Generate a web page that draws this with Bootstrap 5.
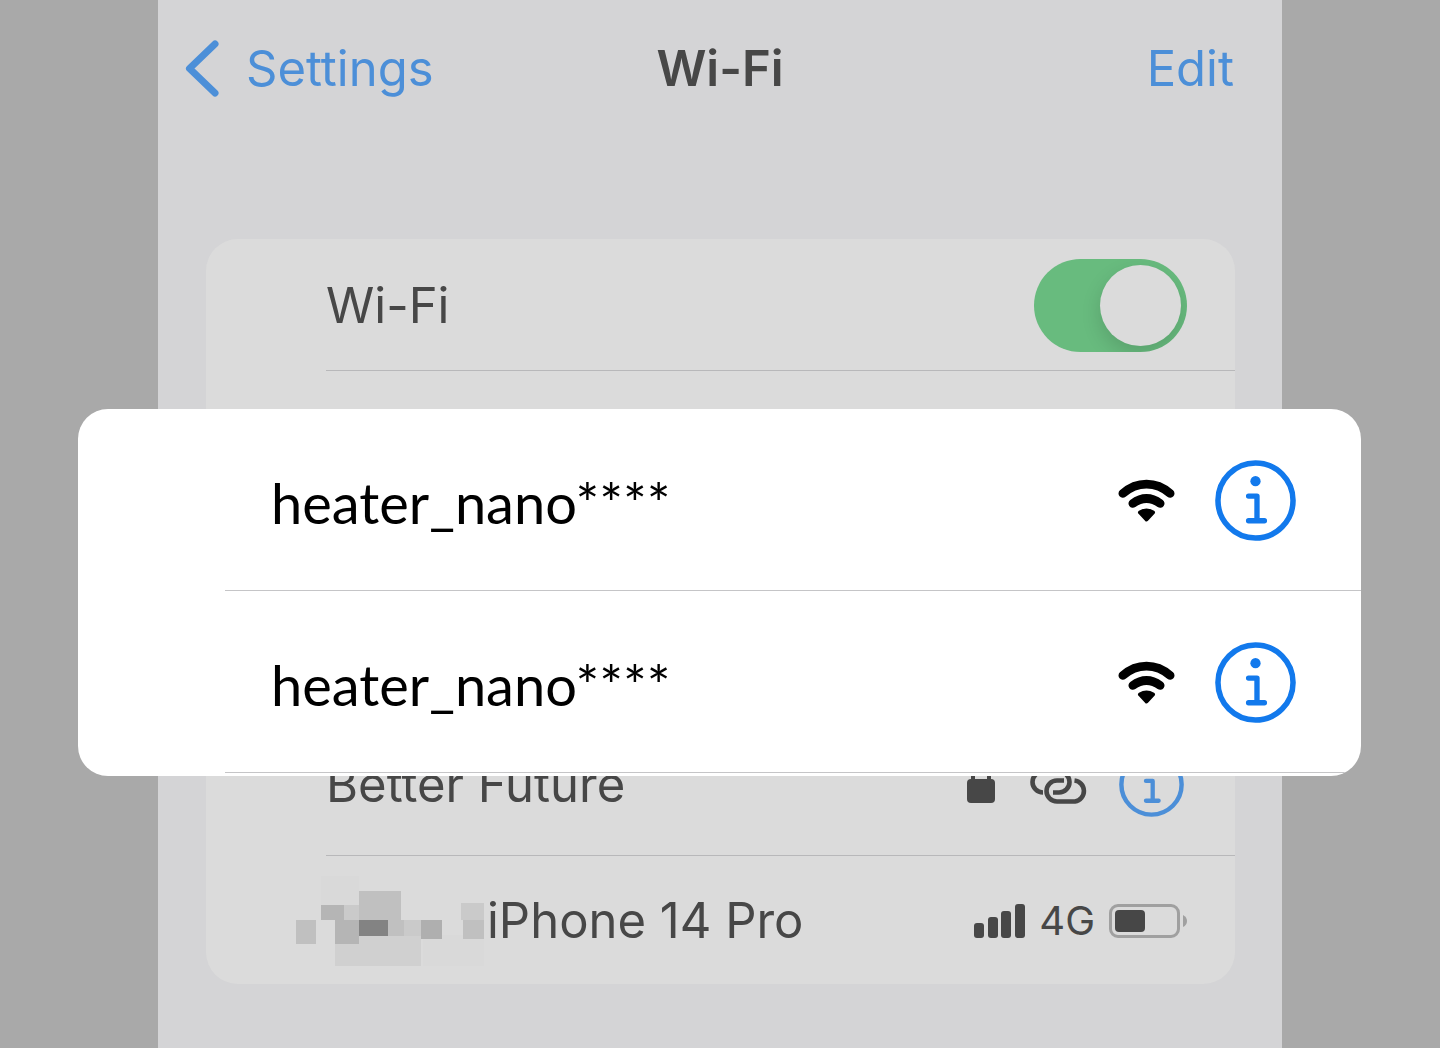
<!DOCTYPE html>
<html lang="en">
<head>
<meta charset="utf-8">
<meta name="viewport" content="width=device-width, initial-scale=1">
<title>Wi-Fi</title>
<link href="https://cdn.jsdelivr.net/npm/bootstrap@5.3.0/dist/css/bootstrap.min.css" rel="stylesheet">
<style>
  body { background: #a9a9a9; color: #474747; font-family: Inter, "Liberation Sans", sans-serif; font-size: 49px; line-height: 60px; }
  a, .info-btn { color: #4c8fd8; }
  .phone { max-width: 1124px; background: #d4d4d6; }
  .topbar { height: 136px; padding: 1px 48px 0; margin-bottom: 103px; }
  .topbar h1 { font-size: 49px; line-height: 60px; font-weight: 600; }
  .back { gap: 26px; margin-left: -21px; }
  .panel { margin: 0 47px 0 48px; background: #dbdbdb; border-radius: 32px; }
  .line { margin-left: 120px; padding: 2px 48px 0 0; height: 132px; border-bottom: 1px solid #b8b8ba; }
  .line-tall { height: 144px; padding-right: 51px; }
  .line:last-child { border-bottom: 0; height: 128px; padding-top: 1px; }
  .slot { height: 341px; }
  .switch-input { appearance: none; width: 153px; height: 93px; border-radius: 47px; background: #dbdbdb; padding: 6px; overflow: hidden; }
  .switch-input::before { content: ""; display: block; width: 81px; height: 81px; border-radius: 50%; background: #dbdbdb; box-shadow: 0 8px 20px rgba(0,0,0,.14); }
  .switch-input:checked { background: #68bb7e; }
  .switch-input:checked::before { margin-left: auto; }
  .info-btn { line-height: 0; }
  .status { gap: 32px; }
  .signal { gap: 14px; font-size: 40px; }
  .person { gap: 3px; }
  .mosaic { margin-left: -30px; }
  .callout-box { top: 38px; left: -128px; right: -126px; z-index: 2; background: #fff; border-radius: 30px; padding-bottom: 3px; color: #000; }
  .net { height: 182px; margin-left: 147px; padding: 2px 65px 0 46px; border-bottom: 1px solid #c5c5c7; font-family: Lato, "Noto Sans", sans-serif; font-size: 56px; line-height: 72px; }
  .net-name { padding-top: 4px; }
  .net .status { gap: 40px; }
  .net .info-btn { color: #1279ec; }
</style>
</head>
<body>
<svg class="d-none" xmlns="http://www.w3.org/2000/svg">
  <symbol id="info" viewBox="0 0 82 82">
    <g fill="none" stroke="currentColor" stroke-width="5.400" stroke-linecap="round" stroke-linejoin="round">
      <circle cx="41" cy="41" r="38" stroke-width="5.600"/>
      <path d="M34 36.500h8.500V61.500M34 61.500h16"/>
    </g>
    <circle cx="41" cy="21.500" r="5.200" fill="currentColor"/>
  </symbol>
  <symbol id="wifi" viewBox="0 0 57 43">
    <g fill="none" stroke="currentColor" stroke-width="8.600" stroke-linecap="round">
      <path d="M4.800 14.500C19 2 38 2 52.200 14.500M14.800 24.500Q28.500 14.500 42.200 24.500"/>
    </g>
    <path d="M22 33.500Q28.500 29.500 35 33.500L28.500 40.500z" fill="currentColor" stroke="currentColor" stroke-width="4" stroke-linejoin="round"/>
  </symbol>
</svg>
<main class="phone mx-auto min-vh-100 pb-5">
  <header class="topbar row g-0 align-items-center">
    <div class="col d-flex"><a href="#" class="back d-flex align-items-center text-decoration-none">
      <svg width="35" height="58" viewBox="0 0 35 58" fill="none" stroke="currentColor" stroke-width="7" stroke-linecap="round" stroke-linejoin="round" aria-hidden="true"><path d="M30 4L4.500 28.500 30 53"/></svg>
      <span>Settings</span></a></div>
    <h1 class="col-auto mb-0">Wi-Fi</h1>
    <div class="col text-end"><a href="#" class="text-decoration-none">Edit</a></div>
  </header>
  <section class="panel">
    <div class="line d-flex align-items-center justify-content-between">
      <label for="wifiSwitch">Wi-Fi</label>
      <input class="switch-input" type="checkbox" role="switch" id="wifiSwitch" checked>
    </div>
    <div class="slot position-relative">
      <div class="callout-box position-absolute overflow-hidden">
        <div class="net d-flex align-items-center justify-content-between">
          <span class="net-name">heater_nano****</span>
          <div class="status d-flex align-items-center">
            <svg width="57" height="43" aria-hidden="true"><use href="#wifi"/></svg>
            <button type="button" class="info-btn border-0 bg-transparent p-0" aria-label="Network details"><svg width="81" height="81"><use href="#info"/></svg></button>
          </div>
        </div>
        <div class="net d-flex align-items-center justify-content-between">
          <span class="net-name">heater_nano****</span>
          <div class="status d-flex align-items-center">
            <svg width="57" height="43" aria-hidden="true"><use href="#wifi"/></svg>
            <button type="button" class="info-btn border-0 bg-transparent p-0" aria-label="Network details"><svg width="81" height="81"><use href="#info"/></svg></button>
          </div>
        </div>
      </div>
    </div>
    <div class="line line-tall d-flex align-items-center justify-content-between">
      <span>Better Future</span>
      <div class="status d-flex align-items-center">
        <svg width="30" height="42" viewBox="0 0 30 42" aria-hidden="true"><rect y="15" width="28" height="24" rx="4" fill="#474747"/><path d="M6 16V8a8 8 0 0 1 16 0v8" fill="none" stroke="#474747" stroke-width="4"/></svg>
        <svg width="58" height="43" viewBox="0 0 58 43" fill="none" stroke="#474747" stroke-width="4.600" aria-hidden="true"><path d="M45.500 17.500A10.600 10.600 0 0 1 46 38.500H28a10.500 10.500 0 0 1 0-21h7"/><path d="M14 29.500a10.500 10.500 0 0 1 0-21H30a10.500 10.500 0 0 1 0 21H24"/></svg>
        <button type="button" class="info-btn border-0 bg-transparent p-0" aria-label="Network details"><svg width="65" height="65"><use href="#info"/></svg></button>
      </div>
    </div>
    <div class="line d-flex align-items-center justify-content-between">
      <div class="person d-flex align-items-center">
        <svg class="mosaic" width="188" height="90" viewBox="0 0 188 90" shape-rendering="crispEdges" aria-hidden="true">
          <path fill="#d9d9d9" d="M25 0h38v29H25zM127 59h61v31h-61z"/>
          <path fill="#d0d0d0" d="M39 60h86v30H39z"/>
          <path fill="#c0c0c0" d="M63 15h42v29H63zM0 44h20v24H0zM92 44h16v16H92zM167 44h21v19h-21z"/>
          <path fill="#b5b5b5" d="M25 29h23v15H25zM39 44h24v24H39z"/>
          <path fill="#cacaca" d="M48 29h15v15H48zM108 44h17v16h-17zM165 27h23v17h-23z"/>
          <path fill="#838383" d="M63 44h29v16H63z"/>
          <path fill="#afafaf" d="M125 44h21v19h-21z"/>
        </svg>
        <span>iPhone 14 Pro</span>
      </div>
      <div class="signal d-flex align-items-center">
        <svg width="51" height="34" viewBox="0 0 51 34" fill="#474747" aria-hidden="true"><rect y="19" width="10" height="15" rx="3"/><rect x="14" y="13" width="10" height="21" rx="3"/><rect x="27" y="7" width="10" height="27" rx="3"/><rect x="41" width="10" height="34" rx="3"/></svg>
        <span>4G</span>
        <svg width="78" height="34" viewBox="0 0 78 34" aria-hidden="true"><rect x="1.500" y="1.500" width="68" height="31" rx="7.500" fill="none" stroke="#a0a0a0" stroke-width="3"/><rect x="6" y="6" width="30" height="22" rx="4" fill="#474747"/><path d="M74 11q4 2 4 6t-4 6z" fill="#a0a0a0"/></svg>
      </div>
    </div>
  </section>
</main>
<script src="https://cdn.jsdelivr.net/npm/bootstrap@5.3.0/dist/js/bootstrap.bundle.min.js"></script>
</body>
</html>
